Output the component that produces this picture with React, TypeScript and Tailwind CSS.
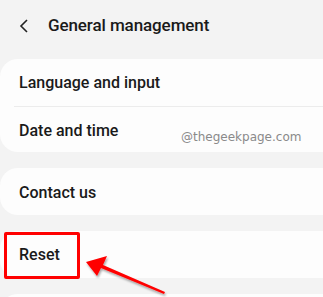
export default function App() {
  return (
    <div
      className="relative h-[297px] w-[323px] overflow-hidden bg-[#f3f3f3] text-[#1a1a1a]"
      style={{ fontFamily: "Roboto, 'Noto Sans', sans-serif" }}
    >
      <div className="flex h-[48px] items-center pt-[4px]">
        <svg width="10" height="14" viewBox="0 0 10 14" className="ml-[19px]">
          <path d="M8 1 L2 7 L8 13" fill="none" stroke="#222" strokeWidth="1.6" />
        </svg>
        <span className="ml-[19px] text-[17px] font-medium tracking-[-0.1px]">General management</span>
      </div>

      <div className="mt-[11px] flex flex-col gap-[16px]">
        <div className="mr-[-30px] rounded-[18px] bg-[#fdfdfd]">
          <div className="flex h-[47px] items-center pl-[19px] text-[16px] font-medium">Language and input</div>
          <div className="ml-[14px] h-px bg-[#ececec]" />
          <div className="relative flex h-[45px] items-center pl-[19px] pt-[2px] text-[16px] font-medium">
            Date and time
            <span
              className="absolute left-[181px] top-[21px] text-[12px] font-normal text-[#8a8a8a]"
              style={{ fontFamily: "'DejaVu Sans', sans-serif" }}
            >
              @thegeekpage.com
            </span>
          </div>
        </div>

        <div className="mr-[-30px] flex h-[47px] items-center rounded-[18px] bg-[#fdfdfd] pl-[19px] pt-[2px] text-[16px] font-medium">
          Contact us
        </div>

        <div className="mr-[-30px] flex h-[47px] items-center rounded-[18px] bg-[#fdfdfd] pl-[19px] text-[16px] font-medium">
          Reset
        </div>

        <div className="mr-[-30px] h-[47px] rounded-[18px] bg-[#fdfdfd]" />
      </div>

      <div className="absolute left-[4px] top-[232px] h-[47px] w-[76px] rounded-[2px] border-[3px] border-[#ff0000]" />

      <svg className="absolute left-0 top-0" width="323" height="297" viewBox="0 0 323 297">
        <defs>
          <filter id="sh" x="-20%" y="-20%" width="140%" height="160%">
            <feDropShadow dx="1" dy="2" stdDeviation="1.2" floodColor="#000" floodOpacity="0.35" />
          </filter>
        </defs>
        <g filter="url(#sh)">
          <path d="M86 262 L107 256 L103 265 L165 292 L164 294 L101 268 L97 276 Z" fill="#ff0000" />
        </g>
      </svg>
    </div>
  );
}
